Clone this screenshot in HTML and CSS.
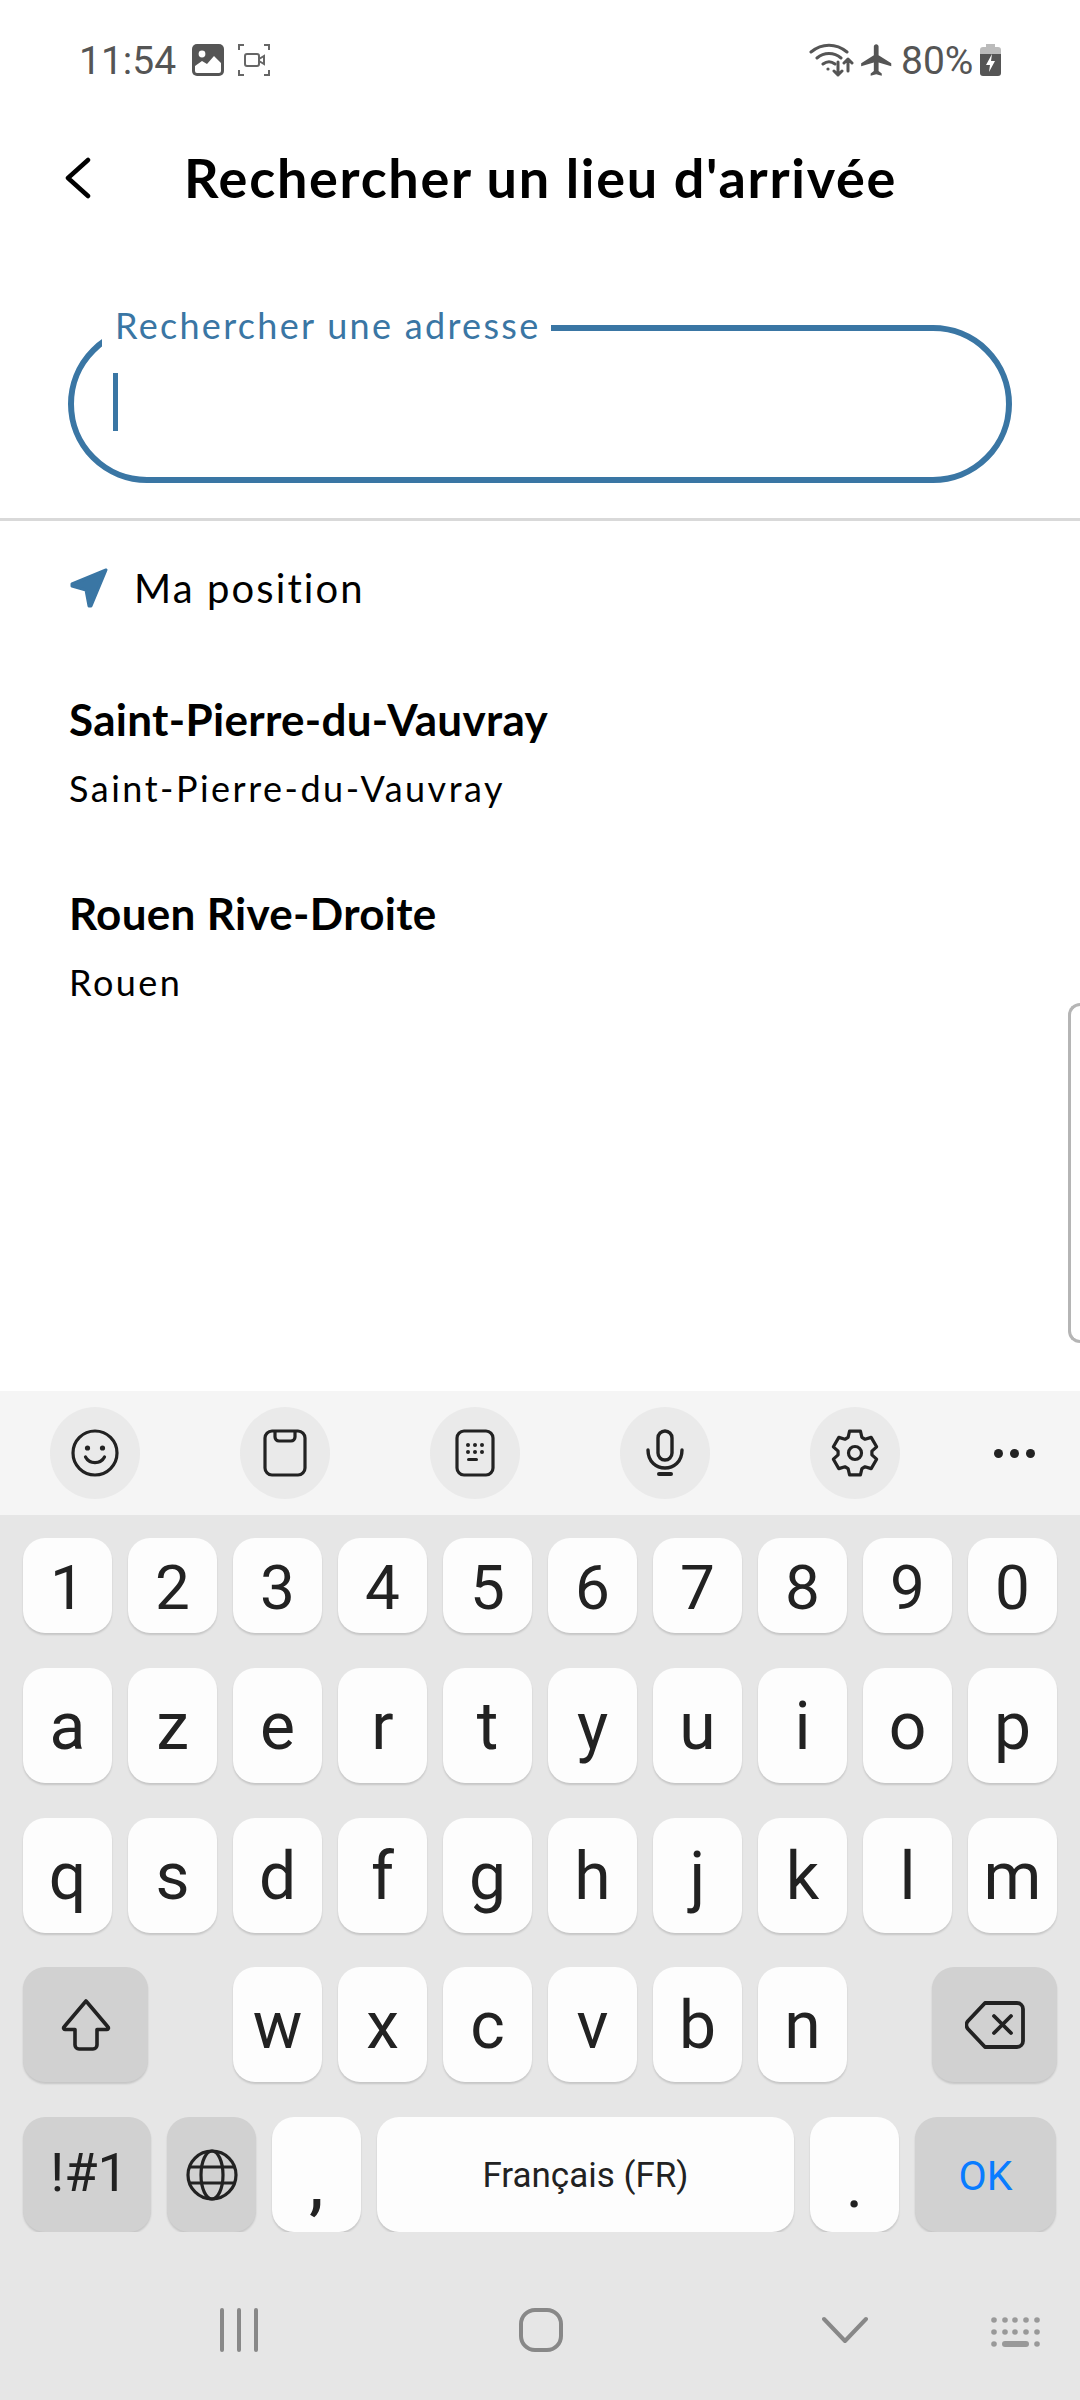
FILE: index.html
```html
<!DOCTYPE html>
<html lang="fr">
<head>
  <meta charset="UTF-8">
  <meta name="viewport" content="width=device-width, initial-scale=1.0">
  <title>Rechercher un lieu d'arrivée</title>
  <link rel="stylesheet" href="styles.css">
</head>
<body>
  <div class="status">
    <span class="time">11:54</span>
    <svg class="st-img" viewBox="0 0 32 32"><rect width="32" height="32" rx="5" fill="#555"/><circle cx="10" cy="10" r="3.4" fill="#fff"/><path d="M3 22l7-5 5 3 7-8 7 7v8a2 2 0 0 1-2 2H5a2 2 0 0 1-2-2z" fill="#fff"/></svg>
    <svg class="st-rec" viewBox="0 0 32 32" fill="none" stroke="#666" stroke-width="2"><path d="M1 6V1h5M26 1h5v5M31 26v5h-5M6 31H1v-5"/><rect x="7" y="10" width="14" height="12" rx="2"/><path d="M21 15l5-3v8l-5-3"/></svg>
    <div class="status-right">
      <svg class="st-wifi" viewBox="0 0 46 34" fill="none" stroke="#555" stroke-width="3" stroke-linecap="round" stroke-linejoin="round"><path d="M2 9c11-9 25-9 36 0M8 15c7-6 17-6 24 0M14 21c4-3 8-3 12 0"/><circle cx="19" cy="26" r="1.6" fill="#555" stroke="none"/><path d="M29 19v13M25 28l4 4 4-4M39 16v12M35 20l4-4 4 4"/></svg>
      <svg class="st-plane" viewBox="0 0 24 24" fill="#555"><path d="M21 16v-2l-8-5V3.5c0-.83-.67-1.5-1.5-1.5S10 2.67 10 3.5V9l-8 5v2l8-2.5V19l-2 1.5V22l3.5-1 3.5 1v-1.5L13 19v-5.5l8 2.5z"/></svg>
      <span class="pct">80%</span>
      <svg class="st-batt" viewBox="0 0 21 32"><path d="M6 0h9v3h3a3 3 0 0 1 3 3v6H0V6a3 3 0 0 1 3-3h3z" fill="#bbb"/><path d="M0 10h21v19a3 3 0 0 1-3 3H3a3 3 0 0 1-3-3z" fill="#555"/><path d="M12 10l-6 11h4l-1 7 6-11h-4z" fill="#fff"/></svg>
    </div>
  </div>

  <div class="topbar">
    <svg class="back" viewBox="0 0 26 42" fill="none" stroke="#000" stroke-width="4.5" stroke-linecap="round" stroke-linejoin="round"><path d="M23 3L3 21l20 18"/></svg>
    <h1>Rechercher un lieu d'arrivée</h1>
  </div>

  <div class="search">
    <fieldset class="field">
      <legend>Rechercher une adresse</legend>
      <div class="caret"></div>
    </fieldset>
  </div>

  <div class="results">
    <div class="my-pos">
      <svg class="near" viewBox="0 0 40 40" fill="#3a76a4" stroke="#3a76a4" stroke-width="3" stroke-linejoin="round"><path d="M37 2L3 16v2l14 4 3 16h2z"/></svg>
      <span>Ma position</span>
    </div>
    <div class="place">
      <div class="place-name">Saint-Pierre-du-Vauvray</div>
      <div class="place-sub">Saint-Pierre-du-Vauvray</div>
    </div>
    <div class="place">
      <div class="place-name">Rouen Rive-Droite</div>
      <div class="place-sub">Rouen</div>
    </div>
    <div class="handle"></div>
  </div>

  <div class="kb-tools">
    <div class="tool">
      <svg viewBox="0 0 48 48" fill="none" stroke="#222" stroke-width="3.2" stroke-linecap="round"><circle cx="24" cy="24" r="22"/><circle cx="16.5" cy="19" r="2.6" fill="#222" stroke="none"/><circle cx="31.5" cy="19" r="2.6" fill="#222" stroke="none"/><path d="M14.5 28c4 7.5 15 7.5 19 0"/></svg>
    </div>
    <div class="tool">
      <svg viewBox="0 0 48 48" fill="none" stroke="#222" stroke-width="3.2" stroke-linejoin="round"><rect x="4" y="2" width="40" height="44" rx="7"/><path d="M14 2v6a4 4 0 0 0 4 4h12a4 4 0 0 0 4-4V2"/></svg>
    </div>
    <div class="tool">
      <svg viewBox="0 0 48 48" fill="none" stroke="#222" stroke-width="3.2"><rect x="6" y="2" width="36" height="44" rx="7"/><g fill="#222" stroke="none"><circle cx="17" cy="16" r="2"/><circle cx="24" cy="16" r="2"/><circle cx="31" cy="16" r="2"/><circle cx="17" cy="23" r="2"/><circle cx="24" cy="23" r="2"/><circle cx="31" cy="23" r="2"/><rect x="16" y="29" width="11" height="3" rx="1.5"/></g></svg>
    </div>
    <div class="tool">
      <svg viewBox="0 0 48 48" fill="none" stroke="#222" stroke-width="3.4" stroke-linecap="round"><rect x="17" y="2" width="14" height="29" rx="7"/><path d="M7 21c0 24 34 24 34 0"/><path d="M18 45h12" stroke-width="4"/></svg>
    </div>
    <div class="tool">
      <svg viewBox="0 0 48 48" fill="none" stroke="#222" stroke-width="3.2" stroke-linejoin="round"><polygon points="18.56,2.17 29.44,2.17 30.9,8.47 34,10.25 40.18,8.37 45.63,17.8 40.9,22.2 40.9,25.8 45.63,30.2 40.18,39.63 34,37.75 30.9,39.53 29.44,45.83 18.56,45.83 17.1,39.53 14,37.75 7.82,39.63 2.37,30.2 7.1,25.8 7.1,22.2 2.37,17.8 7.82,8.37 14,10.25 17.1,8.47"/><circle cx="24" cy="24" r="6.5"/></svg>
    </div>
    <div class="more"><i></i><i></i><i></i></div>
  </div>

  <div class="keyboard">
    <div class="row row-num">
      <div class="key">1</div><div class="key">2</div><div class="key">3</div><div class="key">4</div><div class="key">5</div>
      <div class="key">6</div><div class="key">7</div><div class="key">8</div><div class="key">9</div><div class="key">0</div>
    </div>
    <div class="row">
      <div class="key">a</div><div class="key">z</div><div class="key">e</div><div class="key">r</div><div class="key">t</div>
      <div class="key">y</div><div class="key">u</div><div class="key">i</div><div class="key">o</div><div class="key">p</div>
    </div>
    <div class="row">
      <div class="key">q</div><div class="key">s</div><div class="key">d</div><div class="key">f</div><div class="key">g</div>
      <div class="key">h</div><div class="key">j</div><div class="key">k</div><div class="key">l</div><div class="key">m</div>
    </div>
    <div class="row row-split">
      <div class="key fn w-side">
        <svg class="ic-shift" viewBox="0 0 50 52" fill="none" stroke="#222" stroke-width="3.6" stroke-linejoin="round"><path d="M25 2L47 28a1.5 1.5 0 0 1-1 2.500H36V46a4 4 0 0 1-4 4H18a4 4 0 0 1-4-4V30.500H4A1.500 1.500 0 0 1 3 28z"/></svg>
      </div>
      <div class="mid">
        <div class="key">w</div><div class="key">x</div><div class="key">c</div><div class="key">v</div><div class="key">b</div><div class="key">n</div>
      </div>
      <div class="key fn w-side">
        <svg class="ic-del" viewBox="0 0 60 48" fill="none" stroke="#222" stroke-width="3.800" stroke-linejoin="round" stroke-linecap="round"><path d="M20 2h32a6 6 0 0 1 6 6v32a6 6 0 0 1-6 6H20L3 28a6 6 0 0 1 0-8z"/><path d="M29 15l17 17M46 15L29 32"/></svg>
      </div>
    </div>
    <div class="row row-last">
      <div class="key fn sym">!#1</div>
      <div class="key fn w-std">
        <svg class="ic-globe" viewBox="0 0 52 52" fill="none" stroke="#222" stroke-width="3.200"><circle cx="26" cy="26" r="24"/><ellipse cx="26" cy="26" rx="11" ry="24"/><path d="M3 18h46M3 34h46"/></svg>
      </div>
      <div class="key w-std low comma">,</div>
      <div class="key space">Français (FR)</div>
      <div class="key w-std low">.</div>
      <div class="key fn ok">OK</div>
    </div>
  </div>

  <div class="nav">
    <svg class="nav-recent" viewBox="0 0 40 44" fill="none" stroke="#888" stroke-width="4" stroke-linecap="round"><path d="M3 2v40M20 2v40M37 2v40"/></svg>
    <svg class="nav-home" viewBox="0 0 44 44" fill="none" stroke="#888" stroke-width="4"><rect x="2" y="2" width="40" height="40" rx="14"/></svg>
    <svg class="nav-back" viewBox="0 0 46 28" fill="none" stroke="#888" stroke-width="4" stroke-linecap="round" stroke-linejoin="round"><path d="M2 3l21 22L44 3"/></svg>
    <svg class="nav-kb" viewBox="0 0 50 30" fill="#999"><circle cx="4" cy="3" r="2.800"/><circle cx="15" cy="3" r="2.800"/><circle cx="25" cy="3" r="2.800"/><circle cx="36" cy="3" r="2.800"/><circle cx="47" cy="3" r="2.800"/><circle cx="4" cy="15" r="2.800"/><circle cx="15" cy="15" r="2.800"/><circle cx="25" cy="15" r="2.800"/><circle cx="36" cy="15" r="2.800"/><circle cx="47" cy="15" r="2.800"/><circle cx="4" cy="27" r="2.800"/><rect x="12" y="24" width="27" height="6" rx="3"/><circle cx="47" cy="27" r="2.800"/></svg>
  </div>
</body>
</html>
```

FILE: styles.css
```css
* { box-sizing: border-box; }
body { margin: 0; width: 1080px; height: 2400px; display: flex; flex-direction: column; background: #fff; font-family: "Lato", "Noto Sans", sans-serif; color: #000; overflow: hidden; }

/* status bar */
.status { height: 120px; display: flex; align-items: center; padding: 0 79px 0 79px; color: #555; font-family: "Roboto", sans-serif; }
.time { font-size: 39px; width: 113px; padding-top: 2px; }
.st-img { width: 32px; height: 32px; }
.st-rec { width: 32px; height: 32px; margin-left: 14px; }
.status-right { margin-left: auto; display: flex; align-items: center; }
.st-wifi { width: 46px; height: 34px; }
.st-plane { width: 38px; height: 38px; margin-left: 3px; }
.pct { font-size: 39px; margin-left: 5px; width: 79px; padding-top: 2px; }
.st-batt { width: 21px; height: 32px; }

/* header */
.topbar { height: 116px; display: flex; align-items: center; padding-left: 65px; }
.back { width: 26px; height: 42px; }
h1 { margin: 0 0 2px 93px; font-size: 54px; font-weight: 700; letter-spacing: 1.7px; white-space: nowrap; }

/* search field */
.search { height: 285px; padding: 70px 68px 0; border-bottom: 3px solid #d9d9d9; }
.field { margin: 0; padding: 0 0 0 39px; height: 177px; border: 6px solid #3a76a4; border-radius: 80px; min-width: 0; }
.field legend { margin-left: -11px; padding: 0 11px 6px 13px; font-size: 36px; line-height: 38px; color: #3a76a4; letter-spacing: 2.3px; white-space: nowrap; }
.caret { width: 5px; height: 58px; margin-top: 23px; background: #3a76a4; }

/* results */
.results { position: relative; flex: 1; padding: 0 69px; }
.my-pos { display: flex; align-items: center; height: 134px; font-size: 40px; letter-spacing: 2.1px; }
.near { width: 40px; height: 40px; margin-right: 25px; }
.place { height: 194px; padding-top: 37px; }
.place-name { font-size: 44px; font-weight: 700; line-height: 54px; letter-spacing: 0.3px; white-space: nowrap; }
.place-sub { font-size: 36px; line-height: 46px; margin-top: 19px; letter-spacing: 2.5px; white-space: nowrap; }
.handle { position: absolute; right: 0; top: 482px; width: 12px; height: 340px; border: 3px solid #b5b5b5; border-right: 0; border-radius: 12px 0 0 12px; }

/* keyboard */
.kb-tools { height: 124px; background: #f5f5f5; display: flex; gap: 100px; padding: 16px 0 0 50px; }
.tool { flex: none; width: 90px; height: 92px; border-radius: 50%; background: #eaeaea; display: flex; align-items: center; justify-content: center; }
.tool svg { width: 48px; height: 48px; }
.more { margin-left: -6px; display: flex; gap: 7px; height: 92px; align-items: center; }
.more i { width: 9px; height: 9px; border-radius: 50%; background: #222; }

.keyboard { background: #e6e6e6; padding: 23px 23px 0; display: flex; flex-direction: column; gap: 35px; font-family: "Roboto", sans-serif; color: #222; }
.row { display: flex; gap: 16px; height: 115px; }
.row-num { height: 95px; }
.row-split { justify-content: space-between; margin-top: -1px; }
.mid { display: flex; gap: 16px; width: 614px; }
.key { flex: 1; display: flex; align-items: center; justify-content: center; padding-top: 2px; background: #fdfdfd; border-radius: 22px; box-shadow: 0 2px 2px rgba(0,0,0,0.14); font-size: 66px; }
.row-num .key { font-size: 62px; padding-top: 4px; }
.fn { background: #d1d1d1; }
.w-side { flex: 0 0 125px; padding-top: 0; }
.w-std { flex: 0 0 89px; padding-top: 0; }
.sym { flex: 0 0 128px; font-size: 54px; padding: 0 0 4px 4px; }
.low { padding-top: 20px; }
.comma { font-weight: 500; }
.space { flex: 0 0 417px; font-size: 35px; }
.ok { flex: 0 0 141px; font-size: 41px; color: #0a7cff; }
.ic-shift { width: 50px; height: 52px; }
.ic-del { width: 60px; height: 48px; }
.ic-globe { width: 52px; height: 52px; }

/* nav bar */
.nav { flex: 0 0 168px; background: #e6e6e6; display: flex; align-items: flex-start; padding: 76px 0 0 219px; }
.nav-recent { width: 40px; height: 44px; }
.nav-home { width: 44px; height: 44px; margin-left: 260px; }
.nav-back { width: 46px; height: 28px; margin: 8px 0 0 259px; }
.nav-kb { width: 50px; height: 30px; margin: 9px 0 0 122px; }
```
